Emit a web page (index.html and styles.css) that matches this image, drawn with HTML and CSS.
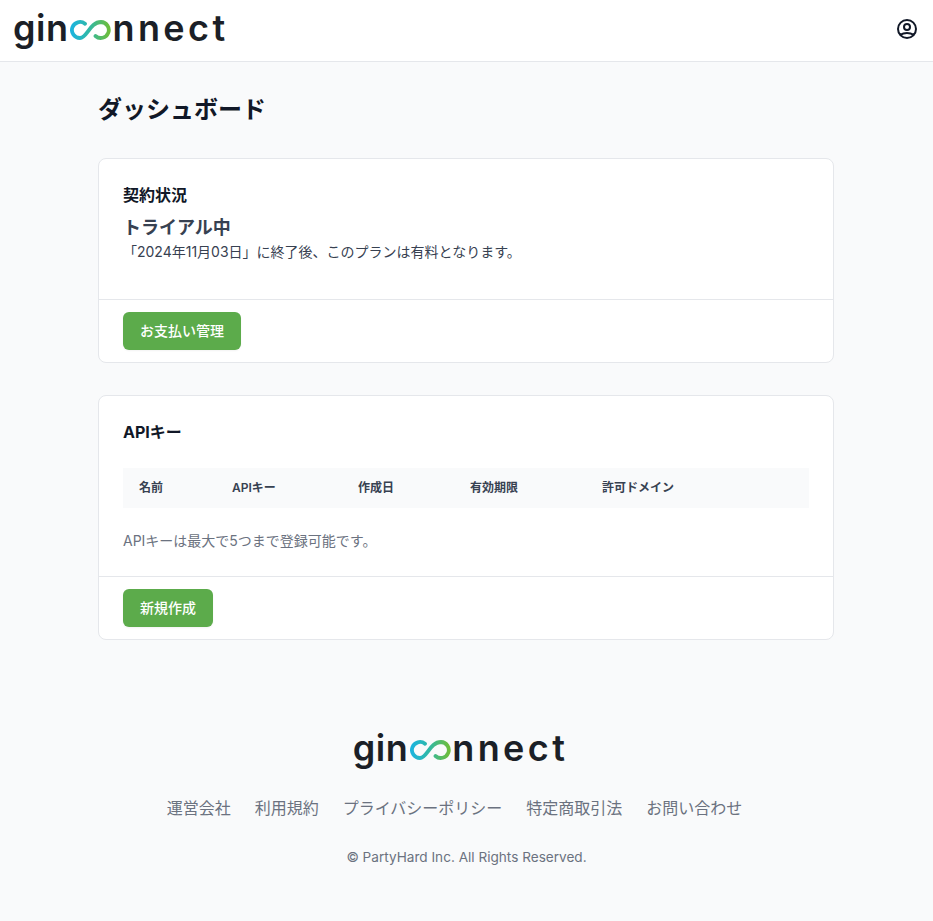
FILE: index.html
```html
<!DOCTYPE html>
<html lang="ja">
<head>
    <meta charset="UTF-8">
    <meta name="viewport" content="width=device-width, initial-scale=1.0">
    <title>ダッシュボード | ginconnect</title>
    <link rel="stylesheet" href="styles.css">
</head>
<body>
    <header class="site-header">
        <a href="#" class="logo logo-header">
            <span class="logo-gin">gin</span>
            <svg class="logo-mark" viewBox="0 0 41 20" fill="none">
                <defs>
                    <linearGradient id="logo-grad-top" x1="0" x2="1" y1="0" y2="0">
                        <stop offset="0" stop-color="#1cb4dc"/>
                        <stop offset="0.45" stop-color="#2fb8a8"/>
                        <stop offset="1" stop-color="#6cbd3c"/>
                    </linearGradient>
                </defs>
                <path d="M15 3.8A8 8 0 1 0 10 18C17 18 20 2 31 2A8 8 0 1 1 25.5 16" stroke="url(#logo-grad-top)" stroke-width="3.8" stroke-linecap="round"/>
            </svg>
            <span class="logo-nnect">nnect</span>
        </a>
        <a href="#" class="account-link" aria-label="アカウント">
            <svg viewBox="0 0 24 24" fill="none" stroke="currentColor" stroke-width="2" stroke-linecap="round" stroke-linejoin="round">
                <path d="M5.121 17.804A13.937 13.937 0 0112 16c2.5 0 4.847.655 6.879 1.804M15 10a3 3 0 11-6 0 3 3 0 016 0zm6 2a9 9 0 11-18 0 9 9 0 0118 0z"/>
            </svg>
        </a>
    </header>

    <main class="container">
        <h1 class="page-title">ダッシュボード</h1>

        <!-- 契約状況 -->
        <section class="card">
            <div class="card-body card-body-plan">
                <h2 class="card-title">契約状況</h2>
                <div class="plan-name">トライアル中</div>
                <p class="plan-note">「2024年11月03日」に終了後、このプランは有料となります。</p>
            </div>
            <div class="card-footer">
                <a href="#" class="btn">お支払い管理</a>
            </div>
        </section>

        <!-- APIキー -->
        <section class="card">
            <div class="card-body card-body-keys">
                <h2 class="card-title">APIキー</h2>
                <table class="key-table">
                    <thead>
                        <tr>
                            <th class="col-name">名前</th>
                            <th class="col-key">APIキー</th>
                            <th class="col-created">作成日</th>
                            <th class="col-expires">有効期限</th>
                            <th>許可ドメイン</th>
                        </tr>
                    </thead>
                </table>
                <p class="key-note">APIキーは最大で5つまで登録可能です。</p>
            </div>
            <div class="card-footer">
                <a href="#" class="btn">新規作成</a>
            </div>
        </section>
    </main>

    <footer class="site-footer">
        <a href="#" class="logo logo-footer">
            <span class="logo-gin">gin</span>
            <svg class="logo-mark" viewBox="0 0 41 20" fill="none">
                <defs>
                    <linearGradient id="logo-grad-bottom" x1="0" x2="1" y1="0" y2="0">
                        <stop offset="0" stop-color="#1cb4dc"/>
                        <stop offset="0.45" stop-color="#2fb8a8"/>
                        <stop offset="1" stop-color="#6cbd3c"/>
                    </linearGradient>
                </defs>
                <path d="M15 3.8A8 8 0 1 0 10 18C17 18 20 2 31 2A8 8 0 1 1 25.5 16" stroke="url(#logo-grad-bottom)" stroke-width="3.8" stroke-linecap="round"/>
            </svg>
            <span class="logo-nnect">nnect</span>
        </a>
        <nav class="footer-links">
            <a href="#">運営会社</a>
            <a href="#">利用規約</a>
            <a href="#">プライバシーポリシー</a>
            <a href="#">特定商取引法</a>
            <a href="#">お問い合わせ</a>
        </nav>
        <p class="copyright">© PartyHard Inc. All Rights Reserved.</p>
    </footer>
</body>
</html>
```

FILE: styles.css
```css
* { margin: 0; padding: 0; box-sizing: border-box; }
body { font-family: Inter, "Noto Sans CJK JP", sans-serif; background-color: #f9fafb; color: #111827; line-height: 1.5; }
a { text-decoration: none; color: inherit; }

.site-header { display: flex; align-items: center; justify-content: space-between; height: 62px; padding: 0 14px 0 13px; background-color: #fff; border-bottom: 1px solid #e5e7eb; }
.logo { display: inline-flex; align-items: center; height: 40px; font-family: Inter, sans-serif; font-size: 36px; font-weight: 600; line-height: 40px; color: #1b1f27; }
.logo-header { margin-bottom: 6px; }
.logo-footer { margin-left: -12px; }
.logo-gin { letter-spacing: 0.5px; }
.logo-nnect { letter-spacing: 3.4px; }
.logo-mark { width: 41px; height: 20px; margin: 4px 1px 0 2px; flex: none; }
.account-link { display: block; width: 24px; height: 24px; margin-top: -4px; color: #111827; }
.account-link svg { display: block; width: 24px; height: 24px; }

.container { width: 736px; margin-left: 98px; padding-top: 30px; }
.page-title { font-size: 24px; font-weight: 700; line-height: 36px; margin-bottom: 30px; }

.card { background-color: #fff; border: 1px solid #e5e7eb; border-radius: 8px; margin-bottom: 32px; }
.card-body { padding: 24px 24px 0; }
.card-body-plan { height: 140px; }
.card-body-keys { height: 180px; }
.card-title { font-size: 16px; font-weight: 700; line-height: 24px; }
.plan-name { font-size: 18px; font-weight: 600; line-height: 28px; margin-top: 7px; color: #374151; }
.plan-note { font-size: 14px; line-height: 20px; color: #374151; }
.card-footer { padding: 12px 24px; border-top: 1px solid #e5e7eb; }
.btn { display: inline-block; padding: 9px 17px; font-size: 14px; font-weight: 500; line-height: 20px; color: #fff; background-color: #5cab4b; border-radius: 6px; box-shadow: 0 1px 2px rgba(0, 0, 0, 0.05); }

.key-table { width: 100%; margin-top: 24px; border-collapse: collapse; table-layout: fixed; }
.key-table th { height: 40px; padding: 0 16px; font-size: 12px; font-weight: 600; text-align: left; color: #374151; background-color: #f9fafb; }
.col-name { width: 93px; }
.col-key { width: 126px; }
.col-created { width: 112px; }
.col-expires { width: 132px; }
.key-note { margin-top: 23px; font-size: 14px; line-height: 20px; color: #6b7280; }

.site-footer { display: flex; flex-direction: column; align-items: center; padding-top: 56px; }
.footer-links { display: flex; margin-top: 28px; font-size: 16px; line-height: 24px; color: #6b7280; }
.footer-links a { margin-right: 24px; }
.copyright { margin-top: 27px; font-size: 13.6px; line-height: 20px; color: #6b7280; }
```
